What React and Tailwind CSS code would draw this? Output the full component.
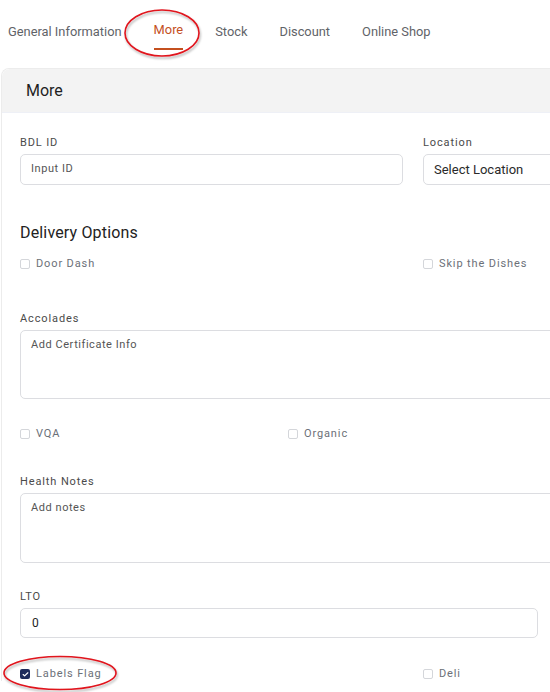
import { Check } from 'lucide-react';

const tabs = ['General Information', 'More', 'Stock', 'Discount', 'Online Shop'];

const Label = ({ children }) => (
  <label className="block text-[11px] tracking-[0.08em] text-[#4a4a4a] mb-[4px] leading-[14px]">{children}</label>
);

const Checkbox = ({ label, checked }) => (
  <label className="flex items-center gap-[6px] text-[11px] tracking-[0.08em] text-[#6b7078] leading-[14px]">
    <span
      className={
        checked
          ? 'w-[10px] h-[10px] rounded-[2px] bg-[#1d2b5c] flex items-center justify-center'
          : 'w-[10px] h-[10px] rounded-[2px] border border-[#d4d6da] bg-white'
      }
    >
      {checked && <Check size={7} strokeWidth={4} className="text-white" />}
    </span>
    {label}
  </label>
);

const App = () => {
  return (
    <div className="relative w-[550px] h-[692px] overflow-hidden bg-white font-['Roboto',sans-serif]">
      {/* tab strip */}
      <div className="flex items-start gap-x-[32px] h-[65px] pl-[8px] pt-[24px] text-[12.85px] text-[#5f6368]">
        {tabs.map((t) =>
          t === 'More' ? (
            <div key={t} className="flex flex-col items-center -mt-[2px]">
              <span className="text-[#c4501f] leading-[16px]">{t}</span>
              <span className="block w-[29px] h-[1.5px] bg-[#c4501f] mt-[10px]" />
            </div>
          ) : (
            <span key={t} className="leading-[16px]">{t}</span>
          )
        )}
      </div>

      {/* card */}
      <div className="w-[830px] ml-[1px] mt-[3px] border-l border-t border-[#ececec] rounded-tl-[8px] bg-white">
        <div className="h-[44px] bg-[#f3f3f3] rounded-tl-[8px] flex items-center pl-[24px] text-[16px] text-[#1f1f1f] border-b border-[#eef0f6]">
          More
        </div>

        <div className="px-[18px] pt-[23px]">
          <div className="grid grid-cols-[383px_383px] gap-x-[20px]">
            <div>
              <Label>BDL ID</Label>
              <div className="h-[31px] rounded-[5px] border border-[#dcdde1] flex items-center pl-[10px] text-[11px] tracking-[0.05em] text-[#555]">
                Input ID
              </div>
            </div>
            <div>
              <Label>Location</Label>
              <div className="h-[31px] rounded-[5px] border border-[#dcdde1] flex items-center pl-[10px] text-[13px] text-[#2a2a2a]">
                Select Location
              </div>
            </div>
          </div>

          <h3 className="mt-[38px] text-[16px] leading-[20px] text-[#222] tracking-[0.01em]">Delivery Options</h3>
          <div className="grid grid-cols-[383px_383px] gap-x-[20px] mt-[14px]">
            <Checkbox label="Door Dash" />
            <Checkbox label="Skip the Dishes" />
          </div>

          <div className="mt-[41px]">
            <Label>Accolades</Label>
            <div className="h-[69px] rounded-[5px] border border-[#dcdde1] pl-[10px] pt-[6px] text-[11px] tracking-[0.05em] text-[#555]">
              Add Certificate Info
            </div>
          </div>

          <div className="grid grid-cols-[248px_248px_248px] gap-x-[20px] mt-[28px]">
            <Checkbox label="VQA" />
            <Checkbox label="Organic" />
          </div>

          <div className="mt-[34px]">
            <Label>Health Notes</Label>
            <div className="h-[70px] rounded-[5px] border border-[#dcdde1] pl-[10px] pt-[6px] text-[11px] tracking-[0.05em] text-[#555]">
              Add notes
            </div>
          </div>

          <div className="mt-[27px] w-[518px]">
            <Label>LTO</Label>
            <div className="h-[30px] rounded-[5px] border border-[#dcdde1] flex items-center pl-[11px] text-[12px] text-[#222]">
              0
            </div>
          </div>

          <div className="grid grid-cols-[383px_383px] gap-x-[20px] mt-[29px]">
            <Checkbox label="Labels Flag" checked />
            <Checkbox label="Deli" />
          </div>
        </div>
      </div>

      {/* red call-out rings */}
      <svg className="absolute left-0 top-0 pointer-events-none" width="550" height="692">
        <defs>
          <filter id="ring-shadow" x="-20%" y="-20%" width="140%" height="140%">
            <feDropShadow dx="1" dy="2" stdDeviation="1.2" floodColor="#000" floodOpacity="0.3" />
          </filter>
        </defs>
        <ellipse cx="162" cy="33" rx="37" ry="23" fill="none" stroke="#e0141e" strokeWidth="1.6" filter="url(#ring-shadow)" />
        <ellipse cx="60" cy="673" rx="56" ry="16.5" fill="none" stroke="#e0141e" strokeWidth="1.6" filter="url(#ring-shadow)" />
      </svg>
    </div>
  );
};

export default App;
